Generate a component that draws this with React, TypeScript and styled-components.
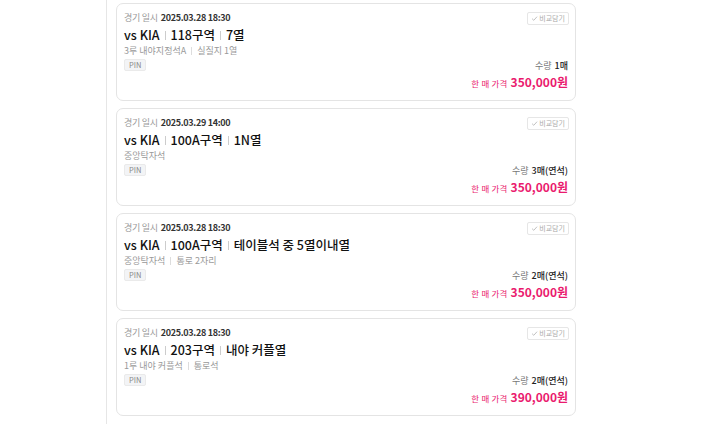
import React from "react";
import styled, { createGlobalStyle } from "styled-components";

const Global = createGlobalStyle`
  html, body { margin: 0; padding: 0; background: #fff; }
  body { font-family: "Noto Sans CJK KR", "Noto Sans", sans-serif; color: #222; }
`;

const Page = styled.div`
  display: flex;
  height: 424px;
  overflow: hidden;
`;

const Gutter = styled.div`
  width: 106px;
  flex: none;
`;

const Panel = styled.div`
  border-left: 1px solid #e6e6e6;
  padding: 3px 0 0 9px;
  display: flex;
  flex-direction: column;
  gap: 7px;
`;

const Card = styled.div`
  width: 460px;
  height: 98px;
  box-sizing: border-box;
  border: 1px solid #e4e4e4;
  border-radius: 7px;
  padding: 7px 6px 10px 7px;
  display: flex;
  justify-content: space-between;
`;

const Left = styled.div`
  display: flex;
  flex-direction: column;
  align-items: flex-start;
`;

const DateLine = styled.div`
  font-size: 9px;
  line-height: 14px;
  color: #999;
  letter-spacing: -0.3px;
  b { color: #333; font-weight: 600; margin-left: 3px; }
`;

const Title = styled.div`
  font-size: 12.5px;
  line-height: 18px;
  font-weight: 500;
  color: #111;
  margin-top: 1px;
  display: flex;
  align-items: center;
`;

const Bar = styled.span`
  display: inline-block;
  width: 1px;
  height: 9px;
  background: #ccc;
  margin: 0 5px;
`;

const Sub = styled.div`
  font-size: 9px;
  line-height: 14px;
  color: #999;
  display: flex;
  align-items: center;
`;

const SmallBar = styled.span`
  display: inline-block;
  width: 1px;
  height: 8px;
  background: #ddd;
  margin: 0 5px;
`;

const Tag = styled.span`
  margin-top: 1px;
  font-size: 7.5px;
  line-height: 8px;
  padding: 1px 4px;
  color: #888;
  background: #f3f4f6;
  border: 1px solid #eaeaea;
  border-radius: 2px;
`;

const Right = styled.div`
  display: flex;
  flex-direction: column;
  align-items: flex-end;
  justify-content: space-between;
`;

const Compare = styled.button`
  display: flex;
  align-items: center;
  gap: 1px;
  font-family: inherit;
  font-size: 7px;
  line-height: 11px;
  color: #aaa;
  background: #fff;
  border: 1px solid #e6e6e6;
  border-radius: 2px;
  padding: 0 3px;
  margin-top: 1px;
`;

const Bottom = styled.div`
  display: flex;
  flex-direction: column;
  align-items: flex-end;
`;

const Qty = styled.div`
  font-size: 9px;
  line-height: 14px;
  color: #777;
  margin-right: 1px;
  b { color: #222; font-weight: 500; margin-left: 3px; }
`;

const Price = styled.div`
  display: flex;
  align-items: baseline;
  color: #ea1a6e;
  margin-right: 1px;
  span { font-size: 8.5px; margin-right: 3px; letter-spacing: 0.2px; }
  strong { font-size: 12px; font-weight: 700; line-height: 17px; }
`;

type Item = {
  date: string;
  parts: string[];
  sub: string[];
  qty: string;
  price: string;
};

const items: Item[] = [
  { date: "2025.03.28 18:30", parts: ["vs KIA", "118구역", "7열"], sub: ["3루 내야지정석A", "실질지 1열"], qty: "1매", price: "350,000원" },
  { date: "2025.03.29 14:00", parts: ["vs KIA", "100A구역", "1N열"], sub: ["중앙탁자석"], qty: "3매(연석)", price: "350,000원" },
  { date: "2025.03.28 18:30", parts: ["vs KIA", "100A구역", "테이블석 중 5열이내열"], sub: ["중앙탁자석", "통로 2자리"], qty: "2매(연석)", price: "350,000원" },
  { date: "2025.03.28 18:30", parts: ["vs KIA", "203구역", "내야 커플열"], sub: ["1루 내야 커플석", "통로석"], qty: "2매(연석)", price: "390,000원" },
];

const Check = () => (
  <svg width="7" height="7" viewBox="0 0 10 10" fill="none" stroke="#bbb" strokeWidth="1.3">
    <path d="M1.5 5.2 L4 7.6 L8.6 2.4" />
  </svg>
);

export default function App() {
  return (
    <>
      <Global />
      <Page>
        <Gutter />
        <Panel>
          {items.map((it, i) => (
            <Card key={i}>
              <Left>
                <DateLine>
                  경기 일시<b>{it.date}</b>
                </DateLine>
                <Title>
                  {it.parts.map((p, j) => (
                    <React.Fragment key={j}>
                      {j > 0 && <Bar />}
                      {p}
                    </React.Fragment>
                  ))}
                </Title>
                <Sub>
                  {it.sub.map((s, j) => (
                    <React.Fragment key={j}>
                      {j > 0 && <SmallBar />}
                      {s}
                    </React.Fragment>
                  ))}
                </Sub>
                <Tag>PIN</Tag>
              </Left>
              <Right>
                <Compare>
                  <Check />
                  비교담기
                </Compare>
                <Bottom>
                  <Qty>
                    수량<b>{it.qty}</b>
                  </Qty>
                  <Price>
                    <span>한 매 가격</span>
                    <strong>{it.price}</strong>
                  </Price>
                </Bottom>
              </Right>
            </Card>
          ))}
        </Panel>
      </Page>
    </>
  );
}
